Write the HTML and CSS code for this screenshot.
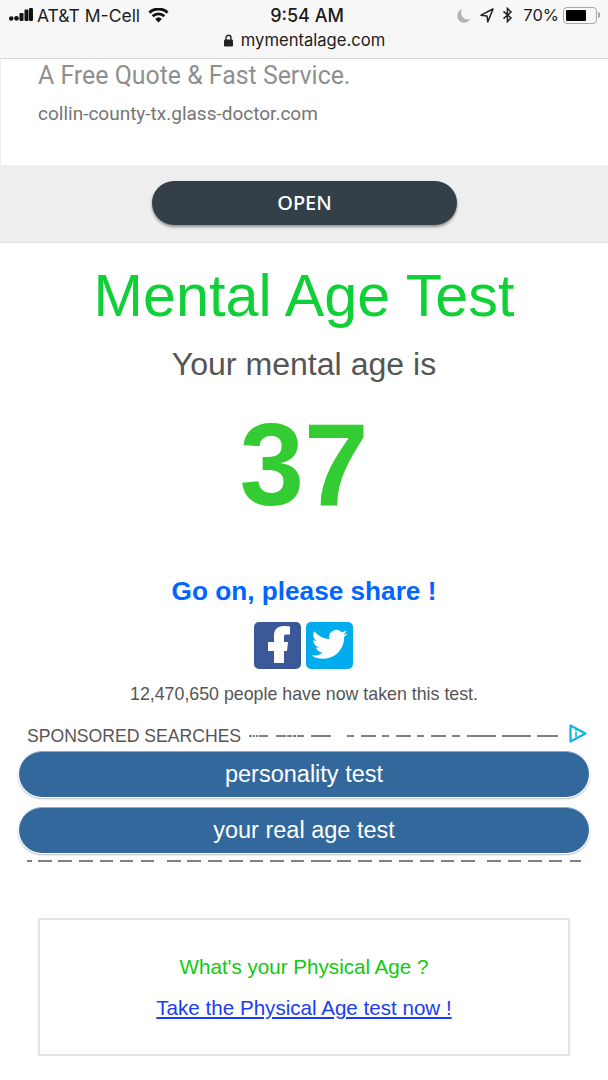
FILE: index.html
```html
<!DOCTYPE html>
<html lang="en">
<head>
<meta charset="utf-8">
<title>Mental Age Test</title>
<link rel="stylesheet" href="styles.css">
</head>
<body>
<header class="status">
  <div class="status-row">
    <div class="status-left">
      <svg class="signal" width="24" height="14" viewBox="0 0 24 14"><circle cx="2.200" cy="10.500" r="2.200"/><circle cx="7.500" cy="10.300" r="2.400"/><rect x="10.500" y="5" width="4" height="8" rx="1.200"/><rect x="15.500" y="1.500" width="4" height="11.500" rx="1.200"/><rect x="20" y="0" width="4" height="13" rx="1.200"/></svg>
      <span class="carrier">AT&amp;T M-Cell</span>
      <svg class="wifi" width="21" height="15" viewBox="0 0 21 15"><path d="M10.500 14.500 7.200 10.900a4.800 4.800 0 0 1 6.600 0Z"/><path d="M5.600 9.200 3.700 7.200a9.800 9.800 0 0 1 13.600 0l-1.900 2a7.100 7.100 0 0 0-9.800 0Z"/><path d="M2.400 5.700.4 3.600a14.600 14.600 0 0 1 20.200 0l-2 2.100a11.700 11.700 0 0 0-16.200 0Z"/></svg>
    </div>
    <div class="clock">9:54 AM</div>
    <div class="status-right">
      <svg class="moon" width="14" height="15" viewBox="0 0 14 15"><path d="M5.400 1A7 7 0 1 0 13.500 10.800 6.600 6.600 0 0 1 5.400 1Z"/></svg>
      <svg class="arrow" width="14" height="15" viewBox="0 0 14 15"><path d="M13 1 1 7.200l6 .7.8 6Z" fill="none" stroke="#222" stroke-width="1.500" stroke-linejoin="round"/></svg>
      <svg class="bt" width="11" height="16" viewBox="0 0 11 16"><path d="M1.500 4.400 9 11 5.400 14.600V1.400L9 5 1.500 11.600" fill="none" stroke="#222" stroke-width="1.500"/></svg>
      <span class="percent">70%</span>
      <div class="battery"><div class="battery-fill"></div></div>
      <div class="battery-tip"></div>
    </div>
  </div>
  <div class="url-row">
    <svg width="11" height="13" viewBox="0 0 11 13"><rect x="1" y="5.500" width="9" height="7" rx="1.200" fill="#222"/><path d="M3 6V3.800a2.500 2.500 0 0 1 5 0V6" fill="none" stroke="#222" stroke-width="1.400"/></svg>
    <span>mymentalage.com</span>
  </div>
</header>

<section class="ad">
  <div class="ad-copy">
    <div class="ad-title">A Free Quote &amp; Fast Service.</div>
    <div class="ad-domain">collin-county-tx.glass-doctor.com</div>
  </div>
  <div class="ad-action"><a class="open-button">OPEN</a></div>
</section>

<main class="result">
  <h1 class="title">Mental Age Test</h1>
  <p class="subtitle">Your mental age is</p>
  <div class="age">37</div>
  <p class="share">Go on, please share !</p>
  <div class="social">
    <svg class="social-icon" viewBox="0 0 47 47"><rect width="47" height="47" rx="5" fill="#3b5998"/><path d="M20 41V29h-6v-9h6v-6.500C20 7.500 23.800 4 29.300 4c2.700 0 5.500.3 6.700.5v8h-4.500c-1.100 0-1.500 1.200-1.500 2.500v5h4l-1 9h-3v12Z" fill="#fff"/></svg>
    <svg class="social-icon" viewBox="0 0 47 47"><rect width="47" height="47" rx="5" fill="#00aced"/><path d="M41.500 11.500c-1.300.6-2.700 1-4.200 1.200 1.500-.9 2.700-2.400 3.200-4.100-1.400.8-3 1.400-4.600 1.800a7.300 7.300 0 0 0-12.500 6.700C17.300 16.800 11.900 13.800 8.300 9.300c-2 3.400-1 7.500 2.200 9.700-1.200 0-2.300-.4-3.300-.9 0 3.500 2.500 6.500 5.900 7.200-1.100.3-2.200.3-3.300.1 1 2.900 3.700 5 6.900 5-3.100 2.500-7.100 3.600-11 3.100 3.300 2.100 7.200 3.300 11.400 3.300 13.700 0 21.500-11.600 21-22 1.500-1 2.400-2.100 3.400-3.300Z" fill="#fff"/></svg>
  </div>
  <p class="count">12,470,650 people have now taken this test.</p>
</main>

<section class="sponsored">
  <div class="sponsored-head">
    <span class="sponsored-label">SPONSORED SEARCHES</span>
    <svg class="dots-top" width="309" height="2" viewBox="0 0 309 2"><path d="M0 1h3M4 1h2M7 1h2M10 1h9M27 1h10M38 1h5M44 1h3M48 1h7M62 1h20M98 1h7M112 1h15M133 1h7M147 1h15M168 1h7M182 1h15M203 1h8M218 1h29M253 1h29M288 1h21"/></svg>
    <svg class="adchoice" width="18" height="19" viewBox="0 0 18 19"><path d="M1.500 1.500v16L16.500 9.500Z" fill="none" stroke="#12b5d8" stroke-width="2.200" stroke-linejoin="round"/><rect x="6.200" y="8" width="1.600" height="5" fill="#12b5d8"/><rect x="6.200" y="5.500" width="1.600" height="1.600" fill="#12b5d8"/></svg>
  </div>
  <a class="search-pill">personality test</a>
  <a class="search-pill">your real age test</a>
  <svg class="dots-bottom" width="556" height="2" viewBox="0 0 556 2"><path d="M1 1h5M12 1h14M32 1h14M53 1h14M74 1h13M94 1h13M115 1h13M141 1h14M161 1h14M182 1h14M203 1h14M224 1h13M244 1h14M265 1h13M285 1h20M311 1h14M332 1h14M353 1h13M373 1h14M394 1h14M415 1h13M435 1h14M461 1h14M482 1h13M502 1h14M523 1h13M544 1h11"/></svg>
</section>

<aside class="physical">
  <p class="physical-q">What's your Physical Age ?</p>
  <a class="physical-link" href="#">Take the Physical Age test now !</a>
</aside>
</body>
</html>
```

FILE: styles.css
```css
* { box-sizing: border-box; }
html, body { margin: 0; height: 1080px; overflow: hidden; background: #fff; }
body { font-family: "Liberation Sans", Arial, sans-serif; color: #555; }
p, h1 { margin: 0; }

.status {
  height: 59px;
  background: #f7f7f7;
  border-bottom: 1px solid #d6d6d6;
  color: #1c1c1c;
  padding: 5px 0 0;
}
.status-row {
  position: relative;
  display: flex;
  justify-content: space-between;
  align-items: center;
  height: 20px;
  padding: 0 8px 0 9px;
}
.status-left, .status-right { display: flex; align-items: center; }
.signal { fill: #111; margin-right: 4px; }
.carrier { font-family: Inter, "Liberation Sans", sans-serif; font-size: 17.500px; margin-right: 8px; }
.wifi { fill: #111; }
.clock { position: absolute; left: 6px; right: 0; text-align: center; font-family: Inter, sans-serif; font-size: 18px; font-weight: 500; }
.status-right { gap: 8px; }
.moon { fill: #b4b4b4; margin-right: 1px; }
.bt { margin-right: 2px; }
.percent { font-family: Inter, "Liberation Sans", sans-serif; font-size: 16.500px; margin-right: -4px; }
.battery { width: 34px; height: 17px; border: 1px solid #a8a8a8; border-radius: 4px; padding: 2px; }
.battery-fill { width: 70%; height: 100%; background: #000; border-radius: 1px; }
.battery-tip { width: 2px; height: 6px; background: #a8a8a8; margin-left: -7px; border-radius: 0 2px 2px 0; }
.url-row {
  display: flex;
  justify-content: center;
  align-items: center;
  gap: 7px;
  height: 24px;
  margin-top: 3px;
  font-family: Inter, sans-serif;
  font-size: 16.600px;
}

.ad { height: 184px; border-bottom: 1px solid #e2e2e2; border-left: 1px solid #eee; }
.ad-copy { height: 106px; padding: 2px 0 0 37px; }
.ad-title { font-family: Roboto, sans-serif; font-size: 24.900px; line-height: 30px; color: #8f8f8f; }
.ad-domain { font-family: Roboto, sans-serif; font-size: 19px; line-height: 22px; margin-top: 12px; color: #757575; }
.ad-action { height: 77px; background: #eee; display: flex; justify-content: center; padding-top: 16px; }
.open-button {
  width: 305px;
  height: 44px;
  border-radius: 22px;
  background: #334048;
  color: #fff;
  box-shadow: 0 2px 3px rgba(0,0,0,.4);
  font-family: "Noto Sans", sans-serif;
  font-weight: 500;
  font-size: 20px;
  line-height: 43px;
  text-align: center;
}

.result { text-align: center; }
.title { font-size: 59.300px; line-height: 66px; font-weight: 400; color: #0fd036; margin-top: 20px; }
.subtitle { font-size: 32.100px; line-height: 40px; margin-top: 15px; color: #555; }
.age { font-size: 116px; font-weight: 700; line-height: 120px; color: #33cc33; margin-top: 21px; }
.share { font-size: 26.200px; font-weight: 700; line-height: 32px; color: #0066ff; margin-top: 50px; }
.social { display: flex; justify-content: center; gap: 5px; margin-top: 15px; height: 47px; padding-right: 1px; }
.social-icon { width: 47px; height: 47px; }
.count { font-size: 17.800px; line-height: 20px; margin-top: 15px; color: #555; }

.sponsored { padding: 0 19px; margin-top: 21px; }
.sponsored-head { display: flex; align-items: center; height: 22px; padding-left: 8px; }
.sponsored-label { font-size: 17.600px; color: #555; white-space: nowrap; }
.dots-top { flex: none; margin: 0 11px 0 8px; stroke: #808080; stroke-width: 2; }
.adchoice { margin: -6px 2px 0 0; flex: none; }
.search-pill {
  display: block;
  height: 46px;
  margin: 4px 0 0;
  border-radius: 23px;
  background: #33689c;
  border-top: 1px solid #8fabc8;
  box-shadow: 0 0 0 1px #fff, 0 1px 2px 1px #b8b8b8;
  color: #fff;
  font-size: 23.500px;
  line-height: 45px;
  text-align: center;
}
.search-pill + .search-pill { margin-top: 10px; }
.dots-bottom { display: block; margin: 7px 0 0 7px; stroke: #808080; stroke-width: 2; }

.physical {
  width: 532px;
  height: 138px;
  margin: 56px 0 0 38px;
  border: 2px solid #e4e4e4;
  text-align: center;
  font-size: 20.600px;
  padding-top: 35px;
}
.physical-q { color: #0ecb0e; line-height: 24px; }
.physical-link { display: block; color: #1a3cf5; line-height: 24px; margin-top: 17px; }
```
